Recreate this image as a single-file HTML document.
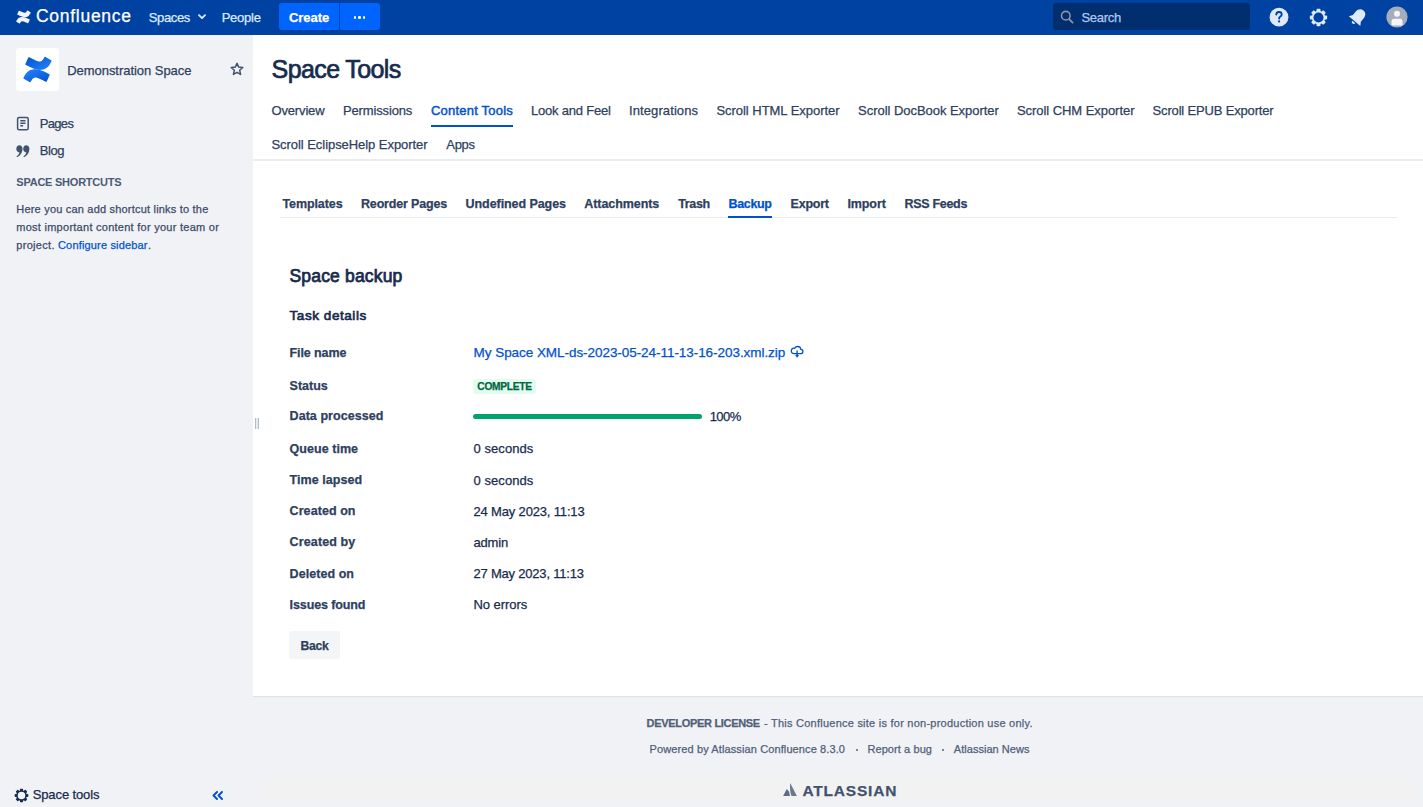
<!DOCTYPE html>
<html><head><meta charset="utf-8"><title>Space Tools - Confluence</title>
<style>
*{box-sizing:border-box;margin:0;padding:0}
html,body{width:1423px;height:807px;overflow:hidden;background:#fff;font-family:"Liberation Sans",sans-serif;color:#172B4D}
.t{position:absolute;white-space:nowrap;-webkit-text-stroke:0.25px currentColor}
</style></head><body>
<div style="position:absolute;left:0;top:0;width:1423px;height:35px;background:#0042A2"></div>
<svg style="position:absolute;left:16px;top:10px" width="15" height="14" viewBox="0 0 32 30">
<path fill="#fff" d="M1.6 22.2c-.3.5-.7 1.1-1 1.6-.3.5-.1 1 .3 1.3l6.2 3.8c.5.3 1 .1 1.3-.3.2-.4.6-1 1-1.6 2.5-4.1 5-3.6 9.5-1.4l6.2 2.9c.5.2 1 0 1.2-.5l3-6.7c.2-.5 0-1-.5-1.3-1.3-.6-3.9-1.8-6.3-3C14.100 13.400 5.800 13.800 1.600 22.200z" opacity=".95"/>
<path fill="#fff" d="M30.4 7.8c.3-.5.7-1.1 1-1.6.3-.5.1-1-.3-1.3L24.9 1.100c-.5-.3-1-.1-1.3.3-.2.4-.6 1-1 1.6-2.5 4.1-5 3.6-9.5 1.4L6.900 1.500c-.5-.2-1 0-1.2.5l-3 6.7c-.2.5 0 1 .5 1.3 1.300.6 3.900 1.800 6.300 3 8.400 4 16.700 3.600 20.900-5.200z" opacity=".95"/>
</svg>
<div class="t" style="left:36.00px;top:7.80px;font-size:17.5px;line-height:17.5px;letter-spacing:0.722px;color:#FFFFFF;">Confluence</div>
<div class="t" style="left:148.80px;top:11.00px;font-size:13px;line-height:13px;letter-spacing:-0.360px;color:#DEEBFF;">Spaces</div>
<svg style="position:absolute;left:198px;top:14px" width="8" height="6" viewBox="0 0 8 6"><path d="M1 1.2 L4 4.2 L7 1.2" stroke="#DEEBFF" stroke-width="1.8" fill="none" stroke-linecap="round" stroke-linejoin="round"/></svg>
<div class="t" style="left:221.70px;top:11.00px;font-size:13px;line-height:13px;letter-spacing:-0.260px;color:#DEEBFF;">People</div>
<div style="position:absolute;left:279px;top:3px;width:60px;height:27px;background:#0065FF;border-radius:3px 0 0 3px"></div>
<div style="position:absolute;left:340px;top:3px;width:40px;height:27px;background:#0065FF;border-radius:0 3px 3px 0"></div>
<div class="t" style="left:289.00px;top:11.00px;font-size:13px;line-height:13px;font-weight:bold;letter-spacing:-0.060px;color:#FFFFFF;">Create</div>
<div style="position:absolute;left:353.7px;top:16.3px;width:2.6px;height:2.6px;border-radius:50%;background:#fff"></div>
<div style="position:absolute;left:358.2px;top:16.3px;width:2.6px;height:2.6px;border-radius:50%;background:#fff"></div>
<div style="position:absolute;left:362.7px;top:16.3px;width:2.6px;height:2.6px;border-radius:50%;background:#fff"></div>
<div style="position:absolute;left:1053px;top:3px;width:197px;height:27px;background:#002E6E;border-radius:3px"></div>
<svg style="position:absolute;left:1059px;top:9px" width="16" height="16" viewBox="0 0 16 16"><circle cx="6.8" cy="6.7" r="4.3" stroke="#8993A4" stroke-width="1.6" fill="none"/><path d="M10 10 L13.6 13.6" stroke="#8993A4" stroke-width="1.8" stroke-linecap="round"/></svg>
<div class="t" style="left:1081.50px;top:11.10px;font-size:13px;line-height:13px;letter-spacing:-0.300px;color:#B0C8F0;">Search</div>
<svg style="position:absolute;left:1269px;top:7px" width="20" height="20" viewBox="0 0 20 20"><circle cx="10" cy="10.2" r="9.4" fill="#DEEBFF"/><path d="M7.3 7.6c0-1.6 1.2-2.6 2.7-2.6 1.6 0 2.7 1 2.7 2.4 0 1.2-.7 1.8-1.6 2.3-.6.4-.9.7-.9 1.4v.5" stroke="#0042A2" stroke-width="1.9" fill="none" stroke-linecap="round"/><circle cx="10.1" cy="14.4" r="1.1" fill="#0042A2"/></svg>
<svg style="position:absolute;left:1309px;top:8px" width="19" height="19" viewBox="0 0 20 20">
<g fill="#DEEBFF"><circle cx="10" cy="10" r="7"/>
<rect x="7.9" y="0.9" width="4.2" height="3.6" rx="1" transform="rotate(0 10 10)"/><rect x="7.9" y="0.9" width="4.2" height="3.6" rx="1" transform="rotate(45 10 10)"/><rect x="7.9" y="0.9" width="4.2" height="3.6" rx="1" transform="rotate(90 10 10)"/><rect x="7.9" y="0.9" width="4.2" height="3.6" rx="1" transform="rotate(135 10 10)"/><rect x="7.9" y="0.9" width="4.2" height="3.6" rx="1" transform="rotate(180 10 10)"/><rect x="7.9" y="0.9" width="4.2" height="3.6" rx="1" transform="rotate(225 10 10)"/><rect x="7.9" y="0.9" width="4.2" height="3.6" rx="1" transform="rotate(270 10 10)"/><rect x="7.9" y="0.9" width="4.2" height="3.6" rx="1" transform="rotate(315 10 10)"/>
</g><circle cx="10" cy="10" r="5.3" fill="#0042A2"/></svg>
<svg style="position:absolute;left:1348px;top:7px" width="20" height="20" viewBox="0 0 20 20">
<g transform="rotate(40 10 10)" fill="#DEEBFF"><path d="M10 1.5c-3.3 0-5.2 2.500-5.2 5.8v4.500L2.500 15.300h15L15.200 11.800V7.300c0-3.300-1.900-5.800-5.200-5.800z"/><path d="M8 16.500h4c0 1.200-.9 2-2 2s-2-.8-2-2z"/></g></svg>
<svg style="position:absolute;left:1386px;top:6px" width="22" height="22" viewBox="0 0 22 22">
<circle cx="11" cy="11" r="10.6" fill="#A5ADBA"/><circle cx="11" cy="7.8" r="3" fill="#F4F5F7"/>
<path d="M5.5 19.5v-4.2c0-1.4 1-2.500 2.400-2.500h6.200c1.400 0 2.400 1.100 2.400 2.500v4.200z" fill="#F4F5F7"/></svg>
<div style="position:absolute;left:0;top:35px;width:253px;height:772px;background:#F1F2F6"></div>
<div style="position:absolute;left:16px;top:48px;width:43px;height:43px;background:#fff;border-radius:3px"></div>
<svg style="position:absolute;left:23px;top:55px" width="29" height="29" viewBox="0 0 32 30">
<defs><linearGradient id="g1" x1="0" y1="0" x2="1" y2="1"><stop offset="0" stop-color="#0052CC"/><stop offset="1" stop-color="#2684FF"/></linearGradient>
<linearGradient id="g2" x1="1" y1="1" x2="0" y2="0"><stop offset="0" stop-color="#0052CC"/><stop offset="1" stop-color="#2684FF"/></linearGradient></defs>
<path fill="url(#g2)" d="M1.6 22.2c-.3.5-.7 1.1-1 1.6-.3.5-.1 1 .3 1.3l6.2 3.8c.5.3 1 .1 1.3-.3.2-.4.6-1 1-1.6 2.5-4.1 5-3.6 9.5-1.4l6.2 2.9c.5.2 1 0 1.2-.5l3-6.7c.2-.5 0-1-.5-1.300-1.300-.6-3.900-1.800-6.300-3C14.100 13.400 5.800 13.800 1.600 22.200z"/>
<path fill="url(#g1)" d="M30.4 7.8c.3-.5.7-1.1 1-1.6.3-.5.1-1-.3-1.3L24.9 1.100c-.5-.3-1-.1-1.3.3-.2.4-.6 1-1 1.6-2.5 4.1-5 3.6-9.5 1.4L6.900 1.500c-.5-.2-1 0-1.2.5l-3 6.7c-.2.5 0 1 .5 1.3 1.300.6 3.900 1.800 6.300 3 8.400 4 16.700 3.600 20.900-5.200z"/>
</svg>
<div class="t" style="left:67.20px;top:64.00px;font-size:13px;line-height:13px;letter-spacing:-0.039px;color:#2E405E;">Demonstration Space</div>
<svg style="position:absolute;left:230px;top:62px" width="14" height="15" viewBox="0 0 14 15"><path d="M7 1.3 L8.7 5.1 L12.8 5.5 L9.7 8.3 L10.6 12.4 L7 10.3 L3.4 12.4 L4.3 8.3 L1.2 5.5 L5.3 5.1 Z" stroke="#42526E" stroke-width="1.5" fill="none" stroke-linejoin="round"/></svg>
<svg style="position:absolute;left:16px;top:116px" width="14" height="15" viewBox="0 0 14 15"><rect x="1.6" y="1.4" width="10.6" height="12.4" rx="1.6" stroke="#42526E" stroke-width="1.5" fill="none"/><path d="M4.3 4.8h5.2M4.3 7.3h5.2M4.3 9.8h2.8" stroke="#42526E" stroke-width="1.4"/></svg>
<div class="t" style="left:39.70px;top:116.80px;font-size:13px;line-height:13px;letter-spacing:-0.650px;color:#2E405E;">Pages</div>
<svg style="position:absolute;left:16px;top:145px" width="14" height="13" viewBox="0 0 14 13">
<path fill="#42526E" d="M3.4 0.2C5.200 0.2 6.500 1.600 6.500 3.700C6.500 7.400 4.600 10.500 1.100 12.200L0.500 11.200C2.300 10.100 3.200 8.700 3.400 7.400C1.500 7.300 0.300 6 0.300 3.800C0.300 1.700 1.600 0.200 3.400 0.200Z"/>
<path fill="#42526E" d="M10.3 0.2C12.100 0.2 13.400 1.600 13.400 3.700C13.400 7.400 11.500 10.500 8 12.200L7.400 11.200C9.200 10.100 10.100 8.700 10.300 7.400C8.400 7.300 7.200 6 7.200 3.800C7.200 1.700 8.500 0.200 10.300 0.200Z"/>
</svg>
<div class="t" style="left:39.70px;top:143.60px;font-size:13px;line-height:13px;letter-spacing:-0.400px;color:#2E405E;">Blog</div>
<div class="t" style="left:16.30px;top:177.19px;font-size:11px;line-height:11px;font-weight:bold;letter-spacing:-0.236px;color:#4A5A76;-webkit-text-stroke:0;">SPACE SHORTCUTS</div>
<div class="t" style="left:16.30px;top:203.99px;font-size:11px;line-height:11px;letter-spacing:0.197px;color:#3B4B68;">Here you can add shortcut links to the</div>
<div class="t" style="left:16.30px;top:222.19px;font-size:11px;line-height:11px;letter-spacing:0.261px;color:#3B4B68;">most important content for your team or</div>
<div class="t" style="left:16.30px;top:239.99px;font-size:11px;line-height:11px;letter-spacing:0.300px;color:#3B4B68;">project.</div>
<div class="t" style="left:58.00px;top:239.99px;font-size:11px;line-height:11px;letter-spacing:0.169px;color:#0052CC;">Configure sidebar</div>
<div class="t" style="left:148.00px;top:239.99px;font-size:11px;line-height:11px;letter-spacing:0.000px;color:#3B4B68;">.</div>
<div style="position:absolute;left:255px;top:418px;width:4px;height:11px;background:#E6E9EE;border-left:1px solid #B3BAC5;border-right:1px solid #B3BAC5"></div>
<svg style="position:absolute;left:14px;top:788px" width="15" height="15" viewBox="0 0 20 20">
<g fill="#172B4D"><circle cx="10" cy="10" r="7"/>
<rect x="7.9" y="0.9" width="4.2" height="3.6" rx="1" transform="rotate(0 10 10)"/><rect x="7.9" y="0.9" width="4.2" height="3.6" rx="1" transform="rotate(45 10 10)"/><rect x="7.9" y="0.9" width="4.2" height="3.6" rx="1" transform="rotate(90 10 10)"/><rect x="7.9" y="0.9" width="4.2" height="3.6" rx="1" transform="rotate(135 10 10)"/><rect x="7.9" y="0.9" width="4.2" height="3.6" rx="1" transform="rotate(180 10 10)"/><rect x="7.9" y="0.9" width="4.2" height="3.6" rx="1" transform="rotate(225 10 10)"/><rect x="7.9" y="0.9" width="4.2" height="3.6" rx="1" transform="rotate(270 10 10)"/><rect x="7.9" y="0.9" width="4.2" height="3.6" rx="1" transform="rotate(315 10 10)"/>
</g><circle cx="10" cy="10" r="5" fill="#F1F2F6"/></svg>
<div class="t" style="left:32.70px;top:788.10px;font-size:13px;line-height:13px;letter-spacing:-0.110px;color:#172B4D;">Space tools</div>
<svg style="position:absolute;left:212px;top:791px" width="11" height="9" viewBox="0 0 11 9"><path d="M5 1 L1.5 4.5 L5 8 M10 1 L6.5 4.5 L10 8" stroke="#0052CC" stroke-width="1.9" fill="none" stroke-linecap="round" stroke-linejoin="round"/></svg>
<div class="t" style="left:271.60px;top:57.45px;font-size:25px;line-height:25px;letter-spacing:-0.610px;color:#172B4D;-webkit-text-stroke:0.7px #172B4D;">Space Tools</div>
<div class="t" style="left:271.50px;top:104.00px;font-size:13px;line-height:13px;letter-spacing:-0.157px;color:#2E405E;">Overview</div>
<div class="t" style="left:343.00px;top:104.00px;font-size:13px;line-height:13px;letter-spacing:-0.150px;color:#2E405E;">Permissions</div>
<div class="t" style="left:531.00px;top:104.00px;font-size:13px;line-height:13px;letter-spacing:-0.200px;color:#2E405E;">Look and Feel</div>
<div class="t" style="left:629.00px;top:104.00px;font-size:13px;line-height:13px;letter-spacing:0.100px;color:#2E405E;">Integrations</div>
<div class="t" style="left:716.40px;top:104.00px;font-size:13px;line-height:13px;letter-spacing:-0.032px;color:#2E405E;">Scroll HTML Exporter</div>
<div class="t" style="left:858.10px;top:104.00px;font-size:13px;line-height:13px;letter-spacing:-0.041px;color:#2E405E;">Scroll DocBook Exporter</div>
<div class="t" style="left:1016.90px;top:104.00px;font-size:13px;line-height:13px;letter-spacing:-0.050px;color:#2E405E;">Scroll CHM Exporter</div>
<div class="t" style="left:1152.60px;top:104.00px;font-size:13px;line-height:13px;letter-spacing:-0.168px;color:#2E405E;">Scroll EPUB Exporter</div>
<div class="t" style="left:431.00px;top:104.00px;font-size:13px;line-height:13px;letter-spacing:0.208px;color:#0052CC;-webkit-text-stroke:0.45px #0052CC;">Content Tools</div>
<div style="position:absolute;left:431px;top:125px;width:82px;height:2px;background:#0052CC"></div>
<div class="t" style="left:271.50px;top:138.20px;font-size:13px;line-height:13px;letter-spacing:-0.054px;color:#2E405E;">Scroll EclipseHelp Exporter</div>
<div class="t" style="left:446.30px;top:138.20px;font-size:13px;line-height:13px;letter-spacing:-0.300px;color:#2E405E;">Apps</div>
<div style="position:absolute;left:253px;top:159px;width:1170px;height:2px;background:#EBECF0"></div>
<div class="t" style="left:282.40px;top:198.03px;font-size:12.5px;line-height:12.5px;font-weight:bold;letter-spacing:-0.087px;color:#2E405E;">Templates</div>
<div class="t" style="left:361.00px;top:198.03px;font-size:12.5px;line-height:12.5px;font-weight:bold;letter-spacing:-0.167px;color:#2E405E;">Reorder Pages</div>
<div class="t" style="left:465.60px;top:198.03px;font-size:12.5px;line-height:12.5px;font-weight:bold;letter-spacing:-0.071px;color:#2E405E;">Undefined Pages</div>
<div class="t" style="left:584.30px;top:198.03px;font-size:12.5px;line-height:12.5px;font-weight:bold;letter-spacing:-0.070px;color:#2E405E;">Attachments</div>
<div class="t" style="left:678.20px;top:198.03px;font-size:12.5px;line-height:12.5px;font-weight:bold;letter-spacing:-0.350px;color:#2E405E;">Trash</div>
<div class="t" style="left:790.60px;top:198.03px;font-size:12.5px;line-height:12.5px;font-weight:bold;letter-spacing:-0.240px;color:#2E405E;">Export</div>
<div class="t" style="left:847.40px;top:198.03px;font-size:12.5px;line-height:12.5px;font-weight:bold;letter-spacing:-0.080px;color:#2E405E;">Import</div>
<div class="t" style="left:904.40px;top:198.03px;font-size:12.5px;line-height:12.5px;font-weight:bold;letter-spacing:-0.287px;color:#2E405E;">RSS Feeds</div>
<div class="t" style="left:728.50px;top:198.03px;font-size:12.5px;line-height:12.5px;font-weight:bold;letter-spacing:-0.340px;color:#0052CC;">Backup</div>
<div style="position:absolute;left:280px;top:217px;width:1118px;height:1px;background:#EBECF0"></div>
<div style="position:absolute;left:728px;top:216px;width:44px;height:2px;background:#0052CC"></div>
<div class="t" style="left:289.50px;top:268.19px;font-size:17.5px;line-height:17.5px;letter-spacing:0.173px;color:#172B4D;-webkit-text-stroke:0.75px #172B4D;">Space backup</div>
<div class="t" style="left:289.50px;top:309.28px;font-size:13.5px;line-height:13.5px;letter-spacing:0.564px;color:#172B4D;-webkit-text-stroke:0.65px #172B4D;">Task details</div>
<div class="t" style="left:289.60px;top:346.73px;font-size:12.5px;line-height:12.5px;font-weight:bold;letter-spacing:-0.113px;color:#2E405E;">File name</div>
<div class="t" style="left:289.60px;top:379.53px;font-size:12.5px;line-height:12.5px;font-weight:bold;letter-spacing:-0.020px;color:#2E405E;">Status</div>
<div class="t" style="left:289.60px;top:410.43px;font-size:12.5px;line-height:12.5px;font-weight:bold;letter-spacing:0.046px;color:#2E405E;">Data processed</div>
<div class="t" style="left:289.60px;top:442.82px;font-size:12.5px;line-height:12.5px;font-weight:bold;letter-spacing:0.044px;color:#2E405E;">Queue time</div>
<div class="t" style="left:289.60px;top:473.93px;font-size:12.5px;line-height:12.5px;font-weight:bold;letter-spacing:0.040px;color:#2E405E;">Time lapsed</div>
<div class="t" style="left:289.60px;top:504.93px;font-size:12.5px;line-height:12.5px;font-weight:bold;letter-spacing:0.067px;color:#2E405E;">Created on</div>
<div class="t" style="left:289.60px;top:536.12px;font-size:12.5px;line-height:12.5px;font-weight:bold;letter-spacing:0.122px;color:#2E405E;">Created by</div>
<div class="t" style="left:289.60px;top:567.82px;font-size:12.5px;line-height:12.5px;font-weight:bold;letter-spacing:0.056px;color:#2E405E;">Deleted on</div>
<div class="t" style="left:289.60px;top:598.62px;font-size:12.5px;line-height:12.5px;font-weight:bold;letter-spacing:-0.109px;color:#2E405E;">Issues found</div>
<div class="t" style="left:473.60px;top:346.18px;font-size:13.5px;line-height:13.5px;letter-spacing:-0.054px;color:#0052CC;">My Space XML-ds-2023-05-24-11-13-16-203.xml.zip</div>
<svg style="position:absolute;left:790px;top:345px" width="14" height="14" viewBox="0 0 14 14">
<path d="M3.8 8.7H10.5C11.900 8.700 12.900 7.800 12.900 6.500C12.900 5.300 12 4.400 10.900 4.300C10.600 2.600 9.300 1.500 7.600 1.500C6.300 1.500 5.200 2.200 4.700 3.300C4.400 3.200 4.100 3.200 3.800 3.200C2.300 3.200 1.300 4.400 1.300 5.900C1.300 7.500 2.400 8.700 3.800 8.700Z" stroke="#0052CC" stroke-width="1.3" fill="none"/>
<path d="M7.1 5.6V10.5" stroke="#0052CC" stroke-width="1.4"/><path d="M5.100 10 L7.1 12.800 L9.100 10Z" fill="#0052CC"/></svg>
<div style="position:absolute;left:473px;top:379px;width:63px;height:15px;background:#E3FCEF;border-radius:3px"></div>
<div class="t" style="left:477.30px;top:381.67px;font-size:10.2px;line-height:10.2px;font-weight:bold;letter-spacing:-0.271px;color:#006644;">COMPLETE</div>
<div style="position:absolute;left:473px;top:413.5px;width:229px;height:5.5px;background:#00A36C;border-radius:3px"></div>
<div class="t" style="left:709.70px;top:410.00px;font-size:13px;line-height:13px;letter-spacing:-0.567px;color:#172B4D;">100%</div>
<div class="t" style="left:473.50px;top:442.40px;font-size:13px;line-height:13px;letter-spacing:0.062px;color:#172B4D;">0 seconds</div>
<div class="t" style="left:473.50px;top:473.50px;font-size:13px;line-height:13px;letter-spacing:0.062px;color:#172B4D;">0 seconds</div>
<div class="t" style="left:473.50px;top:504.50px;font-size:13px;line-height:13px;letter-spacing:-0.165px;color:#172B4D;">24 May 2023, 11:13</div>
<div class="t" style="left:473.50px;top:535.70px;font-size:13px;line-height:13px;letter-spacing:-0.175px;color:#172B4D;">admin</div>
<div class="t" style="left:473.50px;top:567.40px;font-size:13px;line-height:13px;letter-spacing:-0.206px;color:#172B4D;">27 May 2023, 11:13</div>
<div class="t" style="left:473.50px;top:598.20px;font-size:13px;line-height:13px;letter-spacing:-0.050px;color:#172B4D;">No errors</div>
<div style="position:absolute;left:289px;top:631px;width:51px;height:28px;background:#F4F5F7;border-radius:3px"></div>
<div class="t" style="left:300.40px;top:639.68px;font-size:12.2px;line-height:12.2px;font-weight:bold;letter-spacing:-0.233px;color:#2E405E;">Back</div>
<div style="position:absolute;left:253px;top:696px;width:1170px;height:1px;background:#DFE1E6"></div>
<div style="position:absolute;left:253px;top:697px;width:1170px;height:110px;background:#F1F2F6"></div>
<div style="position:absolute;left:261px;top:778px;width:1155px;height:23px;background:#F2F2F3"></div>
<div class="t" style="left:646.60px;top:717.79px;font-size:11px;line-height:11px;font-weight:bold;letter-spacing:-0.312px;color:#505F79;">DEVELOPER LICENSE</div>
<div class="t" style="left:764.00px;top:717.79px;font-size:11px;line-height:11px;letter-spacing:0.240px;color:#505F79;">- This Confluence site is for non-production use only.</div>
<div class="t" style="left:649.60px;top:744.29px;font-size:11px;line-height:11px;letter-spacing:0.111px;color:#505F79;">Powered by Atlassian Confluence 8.3.0</div>
<div style="position:absolute;left:856px;top:749px;width:2px;height:2px;background:#505F79;border-radius:50%"></div>
<div class="t" style="left:867.40px;top:744.29px;font-size:11px;line-height:11px;letter-spacing:0.091px;color:#505F79;">Report a bug</div>
<div style="position:absolute;left:942px;top:749px;width:2px;height:2px;background:#505F79;border-radius:50%"></div>
<div class="t" style="left:953.80px;top:744.29px;font-size:11px;line-height:11px;letter-spacing:0.038px;color:#505F79;">Atlassian News</div>
<svg style="position:absolute;left:783px;top:782px" width="14" height="14" viewBox="0 0 14 14"><path d="M7.2 1 L13.9 14 H8.5 C7.5 11.5 6.700 8 7.2 1Z" fill="#6B778C"/><path d="M0.1 14 L3.8 7 L6.1 9.8 L6.900 14Z" fill="#5E6C84"/></svg>
<div class="t" style="left:802.50px;top:782.89px;font-size:15.5px;line-height:15.5px;font-weight:bold;letter-spacing:0.787px;color:#42526E;">ATLASSIAN</div>
</body></html>
